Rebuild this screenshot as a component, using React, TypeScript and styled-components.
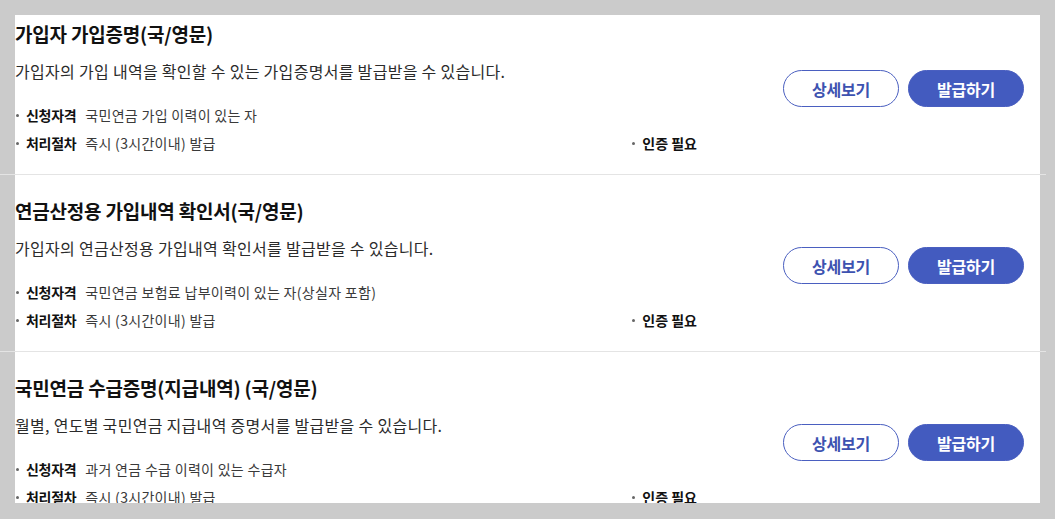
import styled, { createGlobalStyle } from 'styled-components'

const GlobalStyle = createGlobalStyle`
  html, body {
    margin: 0;
    padding: 0;
    background: #cbcbcb;
  }
  body {
    font-family: 'Noto Sans CJK KR', 'Noto Sans', sans-serif;
    color: #222;
    overflow: hidden;
  }
`

interface Service {
  title: string
  desc: string
  target: string
  process: string
  auth: string
}

const services: Service[] = [
  {
    title: '가입자 가입증명(국/영문)',
    desc: '가입자의 가입 내역을 확인할 수 있는 가입증명서를 발급받을 수 있습니다.',
    target: '국민연금 가입 이력이 있는 자',
    process: '즉시 (3시간이내) 발급',
    auth: '인증 필요',
  },
  {
    title: '연금산정용 가입내역 확인서(국/영문)',
    desc: '가입자의 연금산정용 가입내역 확인서를 발급받을 수 있습니다.',
    target: '국민연금 보험료 납부이력이 있는 자(상실자 포함)',
    process: '즉시 (3시간이내) 발급',
    auth: '인증 필요',
  },
  {
    title: '국민연금 수급증명(지급내역) (국/영문)',
    desc: '월별, 연도별 국민연금 지급내역 증명서를 발급받을 수 있습니다.',
    target: '과거 연금 수급 이력이 있는 수급자',
    process: '즉시 (3시간이내) 발급',
    auth: '인증 필요',
  },
]

const Page = styled.div`
  width: 1055px;
  height: 519px;
  padding: 15px 15px 16px 15px;
  box-sizing: border-box;
`

const Panel = styled.section`
  display: flow-root;
  width: 1025px;
  height: 488px;
  background: #ffffff;
  clip-path: inset(0 -20px 0 -20px);
`

const List = styled.ul`
  list-style: none;
  margin: -17px 0 0 0;
  padding: 0;
`

const Item = styled.li`
  position: relative;
  display: flex;
  align-items: center;
  justify-content: space-between;
  padding: 22px 16px 17px 0;
  border-bottom: 1px solid transparent;

  &::after {
    content: '';
    position: absolute;
    left: -15px;
    right: -6px;
    bottom: -1px;
    height: 1px;
    background: #e4e4e4;
  }
`

const Info = styled.div`
  width: 682px;
`

const Title = styled.h3`
  margin: 0;
  font-size: 19px;
  font-weight: 700;
  line-height: 28px;
  letter-spacing: -0.2px;
  color: #111;
`

const Desc = styled.p`
  margin: 10px 0 0;
  font-size: 16px;
  line-height: 26px;
  letter-spacing: 0.3px;
  color: #2b2b2b;
`

const Meta = styled.ul`
  list-style: none;
  margin: 17px 0 0;
  padding: 0;
`

const MetaRow = styled.li`
  display: flex;
  justify-content: space-between;
  height: 28px;
  align-items: center;
`

const Bullet = styled.span<{ $strong?: boolean }>`
  position: relative;
  padding-left: 11px;
  font-size: 14px;
  letter-spacing: ${({ $strong }) => ($strong ? '0' : '0.3px')};
  color: ${({ $strong }) => ($strong ? '#111' : '#3a3a3a')};
  font-weight: ${({ $strong }) => ($strong ? 700 : 400)};

  &::before {
    content: '';
    position: absolute;
    left: 1px;
    top: 50%;
    width: 3px;
    height: 3px;
    margin-top: -1px;
    border-radius: 50%;
    background: #666;
  }
`

const Label = styled.b`
  font-weight: 700;
  color: #111;
  letter-spacing: -0.3px;
  margin-right: 9px;
`

const Actions = styled.div`
  display: flex;
  gap: 9px;
`

const Button = styled.button<{ $primary?: boolean }>`
  width: 116px;
  height: 37px;
  border-radius: 19px;
  border: 1px solid #4a5fc0;
  background: ${({ $primary }) => ($primary ? '#435bbf' : '#ffffff')};
  color: ${({ $primary }) => ($primary ? '#ffffff' : '#3d52b0')};
  font-family: 'Noto Sans CJK KR', 'Noto Sans', sans-serif;
  font-size: 16px;
  font-weight: 700;
  letter-spacing: -0.2px;
  cursor: pointer;
  padding: 0;
`

export default function App() {
  return (
    <>
      <GlobalStyle />
      <Page>
        <Panel>
          <List>
            {services.map((s) => (
              <Item key={s.title}>
                <Info>
                  <Title>{s.title}</Title>
                  <Desc>{s.desc}</Desc>
                  <Meta>
                    <MetaRow>
                      <Bullet>
                        <Label>신청자격</Label>
                        {s.target}
                      </Bullet>
                    </MetaRow>
                    <MetaRow>
                      <Bullet>
                        <Label>처리절차</Label>
                        {s.process}
                      </Bullet>
                      <Bullet $strong>{s.auth}</Bullet>
                    </MetaRow>
                  </Meta>
                </Info>
                <Actions>
                  <Button>상세보기</Button>
                  <Button $primary>발급하기</Button>
                </Actions>
              </Item>
            ))}
          </List>
        </Panel>
      </Page>
    </>
  )
}
